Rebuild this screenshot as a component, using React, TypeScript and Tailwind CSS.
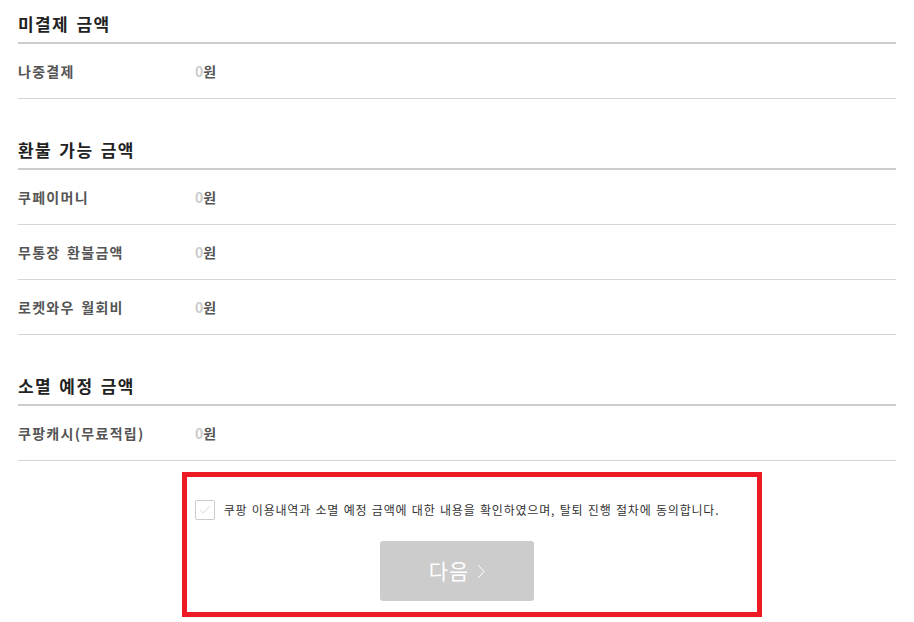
import { Check } from "lucide-react";

const SECTIONS = [
  { title: "미결제 금액", rows: ["나중결제"] },
  { title: "환불 가능 금액", rows: ["쿠페이머니", "무통장 환불금액", "로켓와우 월회비"] },
  { title: "소멸 예정 금액", rows: ["쿠팡캐시(무료적립)"] },
];

export default function App() {
  return (
    <div
      className="w-[914px] h-[622px] bg-white px-[18px] overflow-hidden"
      style={{ fontFamily: '"Noto Sans CJK KR", "Noto Sans", sans-serif' }}
    >
      {SECTIONS.map((s, i) => (
        <section key={s.title} className={i === 0 ? "" : "mt-[27px]"}>
          <h3 className="h-[44px] pt-[12px] border-b-2 border-[#cccccc] text-[17px] leading-[24px] font-bold text-[#222222] tracking-[1.4px] [word-spacing:2px]">
            {s.title}
          </h3>
          {s.rows.map((r) => (
            <div
              key={r}
              className="flex items-center h-[55px] border-b border-[#d5d5d5] text-[14px] font-bold text-[#555555]"
            >
              <span className="w-[177px] tracking-[1.3px] [word-spacing:2px]">{r}</span>
              <span>
                <span className="text-[#cccccc]">0</span>원
              </span>
            </div>
          ))}
        </section>
      ))}

      <div className="relative flex flex-col items-center pt-[39px]">
        <label className="flex items-center gap-[9px]">
          <span className="flex items-center justify-center w-[20px] h-[20px] border border-[#cccccc] rounded-[2px] bg-white">
            <Check className="w-[14px] h-[14px] text-[#d0d0d0]" strokeWidth={1.5} />
          </span>
          <span className="text-[12px] text-[#333333] tracking-[0.8px] [word-spacing:1px]">
            쿠팡 이용내역과 소멸 예정 금액에 대한 내용을 확인하였으며, 탈퇴 진행 절차에 동의합니다.
          </span>
        </label>
        <button className="mt-[21px] w-[154px] h-[60px] bg-[#cccccc] rounded-[3px] flex items-center justify-center gap-[8px] text-white text-[21px] tracking-[1px]">
          <span>다음</span>
          <svg width="8" height="15" viewBox="0 0 8 15" fill="none">
            <polyline points="1,1 7,7.5 1,14" stroke="white" strokeWidth="1" />
          </svg>
        </button>

        <div className="absolute left-[164px] top-[11px] w-[580px] h-[145px] border-[5px] border-[#ed1c24] pointer-events-none" />
      </div>
    </div>
  );
}
